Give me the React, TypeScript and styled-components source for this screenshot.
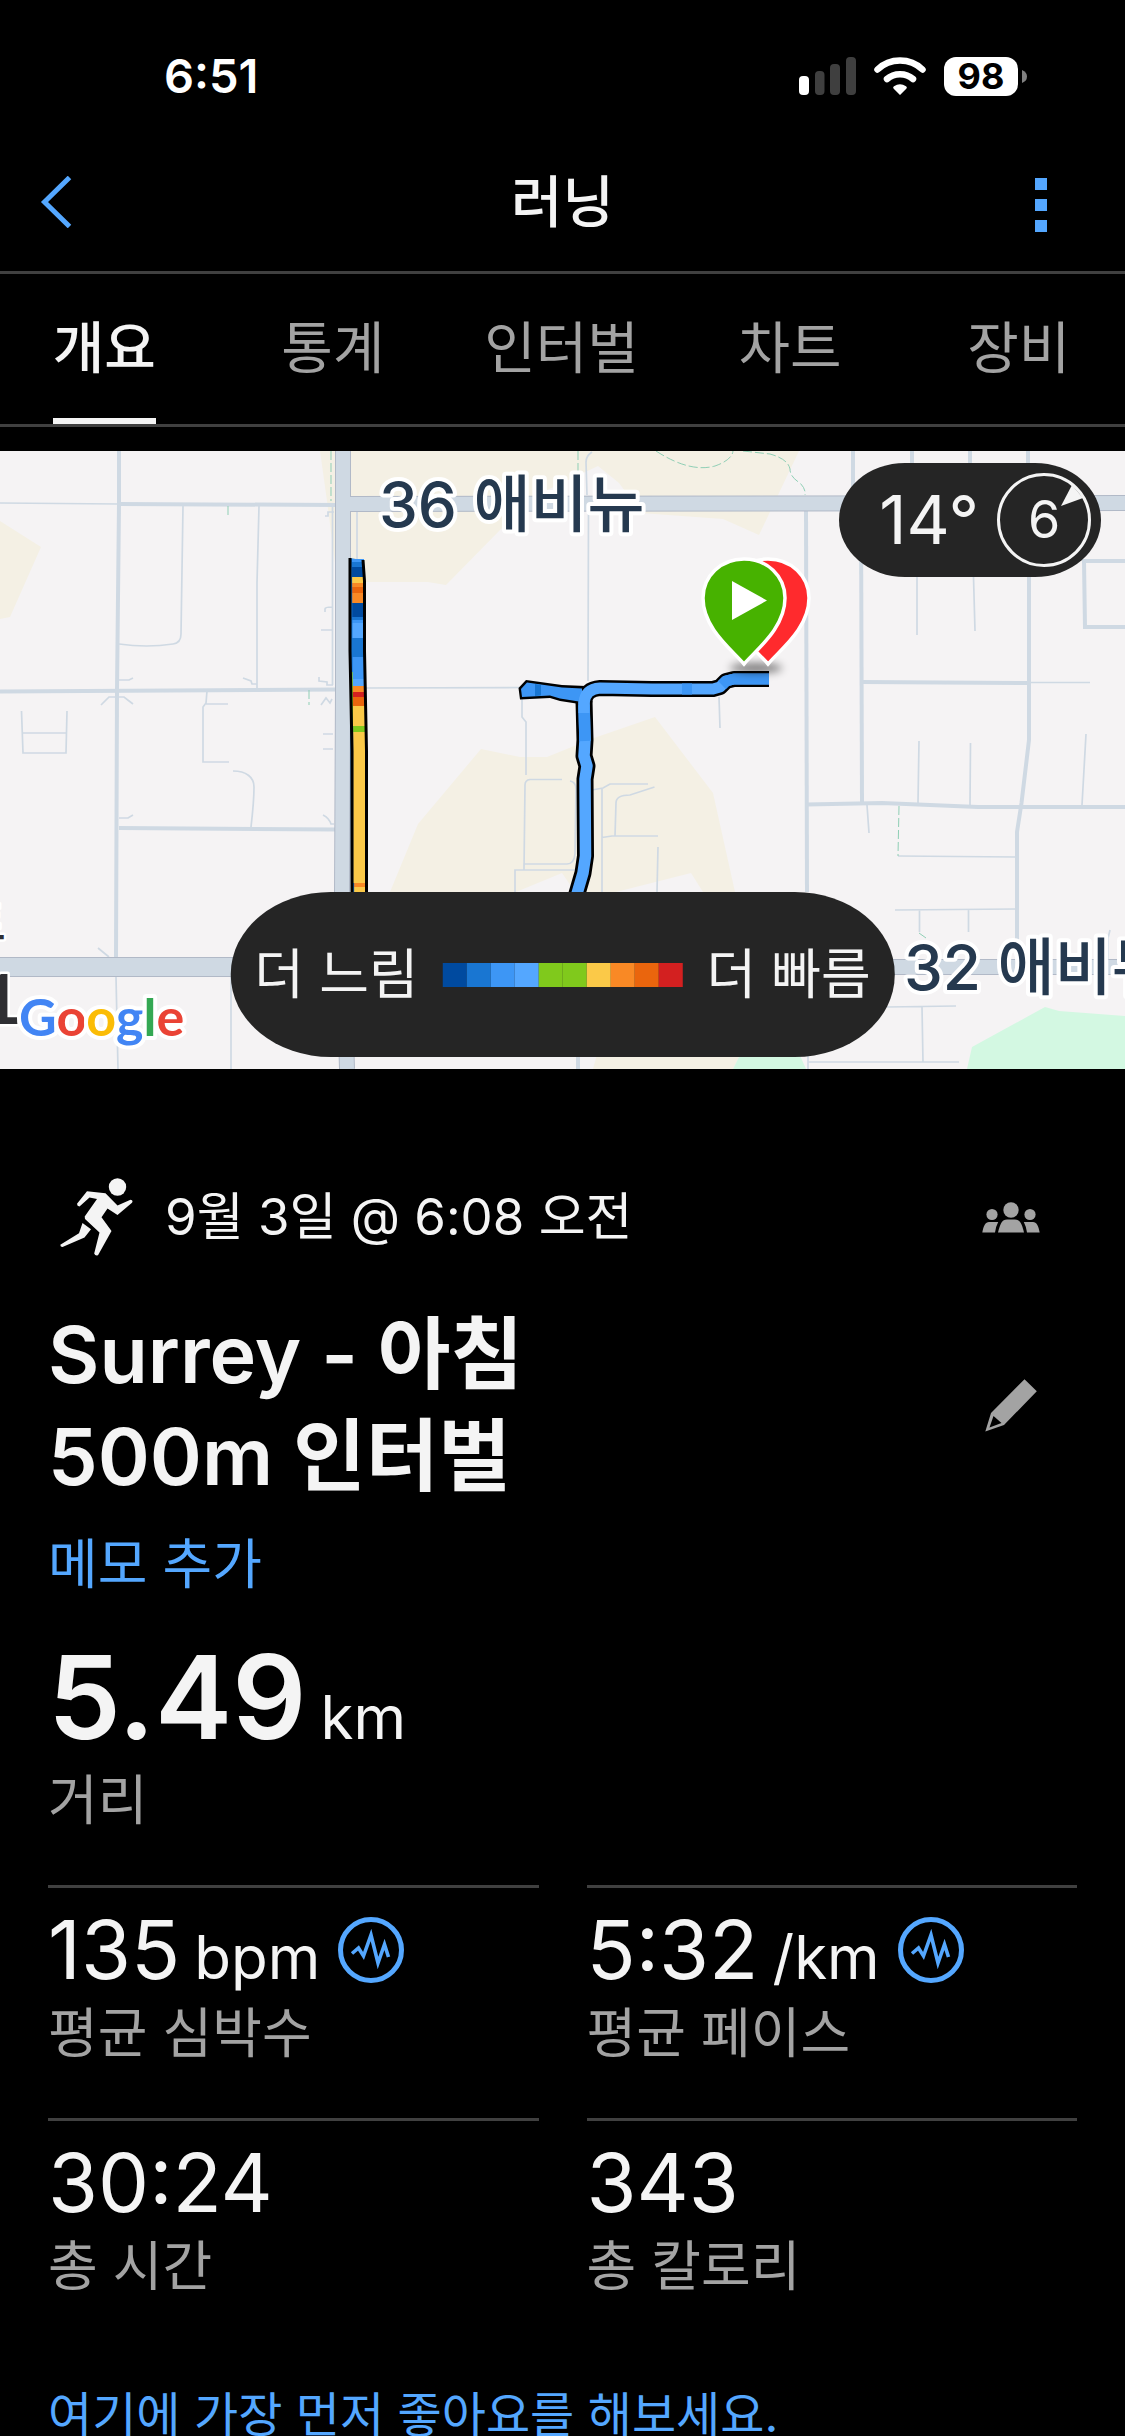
import React from 'react';
import styled, { createGlobalStyle } from 'styled-components';

const color = {
  ink: '#f4f4f4',
  muted: '#a3a3a3',
  line: '#404040',
  link: '#54a7ff',
  panel: '#252525',
  road: '#cfd9e3',
  roadEdge: '#b1b9c7',
  land: '#f5f3f4',
  field: '#f4f0e4',
  park: '#d3f8e2',
  trail: '#8fcfb5',
  mapText: '#25394f',
};

const pace = {
  navy: '#004a9f',
  blue: '#1976d2',
  azure: '#3d96f5',
  sky: '#54a7ff',
  green: '#80c91c',
  yellow: '#fbc948',
  orange: '#f98925',
  rust: '#ea650d',
  red: '#d32020',
};

const GlobalStyle = createGlobalStyle`
  *, *::before, *::after { box-sizing: border-box; }
  html, body { margin: 0; background: #000; }
  body { font-family: Inter, "Noto Sans CJK KR", sans-serif; color: ${color.ink}; }
  h1, h2, p, dl, dt, dd { margin: 0; font-weight: 400; }
  button { background: none; border: 0; padding: 0; margin: 0; font: inherit; color: inherit; cursor: pointer; }
  svg { display: block; }
`;

const Page = styled.div`
  display: flex;
  flex-direction: column;
  height: 100vh;
  background: #000;
`;

const StatusBar = styled.div`
  display: flex;
  flex: none;
  align-items: center;
  justify-content: space-between;
  height: 132px;
  padding: 20px 98px 0 164px;
`;

const Clock = styled.time`
  font-size: 47px;
  line-height: 48px;
  font-weight: 600;
  color: #fff;
`;

const StatusIcons = styled.div`
  display: flex;
  align-items: center;
  gap: 18px;
`;

const Battery = styled.div`
  display: flex;
  align-items: center;
  gap: 4px;
`;

const BatteryBody = styled.span`
  width: 74px;
  height: 39px;
  border-radius: 12px;
  background: #fff;
  color: #000;
  font-size: 36px;
  line-height: 39px;
  font-weight: 700;
  text-align: center;
`;

const Header = styled.header`
  display: grid;
  flex: none;
  grid-template-columns: 120px 1fr 120px;
  align-items: center;
  height: 142px;
  border-bottom: 3px solid ${color.line};
`;

const HeaderTitle = styled.h1`
  font-size: 56px;
  line-height: 68px;
  font-weight: 500;
  text-align: center;
`;

const HeaderButton = styled.button<{ $end?: boolean }>`
  display: flex;
  justify-content: ${(p) => (p.$end ? 'flex-end' : 'flex-start')};
  padding: ${(p) => (p.$end ? '6px 78px 0 0' : '0 0 0 40px')};
`;

const Tabs = styled.nav`
  display: grid;
  flex: none;
  grid-template-columns: repeat(5, 1fr);
  justify-items: center;
  margin: 0 -8px 0 -10px;
  border-bottom: 3px solid ${color.line};
`;

const Tab = styled.button<{ $active?: boolean }>`
  height: 150px;
  padding-top: 4px;
  border-bottom: 6px solid ${(p) => (p.$active ? color.ink : 'transparent')};
  color: ${(p) => (p.$active ? color.ink : color.muted)};
  font-size: 56px;
  line-height: 68px;
  font-weight: ${(p) => (p.$active ? 500 : 400)};
  white-space: nowrap;
`;

const Shell = styled.div`
  flex: none;
  overflow: hidden;
`;

const Content = styled.main`
  flex: 1;
  min-height: 0;
  overflow-y: auto;
  scrollbar-width: none;
  padding-top: 24px;
`;

const MapPanel = styled.section`
  position: relative;
  width: 100%;
  aspect-ratio: 1125 / 618;
  overflow: hidden;
  background: ${color.land};
`;

const MapArt = styled.svg`
  width: 100%;
  height: 100%;
`;

const Weather = styled.div`
  position: absolute;
  top: 12px;
  right: 24px;
  display: flex;
  align-items: center;
  gap: 18px;
  height: 114px;
  padding: 0 10px 0 40px;
  border-radius: 66px / 57px;
  background: ${color.panel};
  font-size: 67px;
  line-height: 80px;
`;

const Wind = styled.div`
  display: grid;
  place-items: center;
  width: 94px;
  height: 94px;
  font-size: 52px;
  line-height: 68px;
  > * { grid-area: 1 / 1; }
`;

const Legend = styled.div`
  position: absolute;
  left: 50%;
  bottom: 12px;
  transform: translateX(-50%);
  display: flex;
  align-items: center;
  gap: 24px;
  height: 165px;
  padding: 0 24px;
  border-radius: 100px / 82px;
  background: ${color.panel};
  font-size: 54px;
  line-height: 68px;
  white-space: nowrap;
`;

const Scale = styled.div`
  display: flex;
`;

const Swatch = styled.span<{ $fill: string }>`
  width: 24px;
  height: 24px;
  background: ${(p) => p.$fill};
`;

const Details = styled.section`
  padding: 98px 48px 0;
`;

const Row = styled.div`
  display: flex;
  align-items: center;
  justify-content: space-between;
`;

const DateLine = styled.div`
  display: flex;
  align-items: center;
  gap: 32px;
  height: 100px;
  padding-left: 12px;
  font-size: 51px;
  line-height: 68px;
`;

const IconButton = styled.button`
  display: flex;
  flex: none;
  align-items: center;
  justify-content: center;
  width: 132px;
  height: 96px;
`;

const TitleRow = styled(Row)`
  margin-top: 36px;
`;

const Title = styled.h2`
  font-size: 79px;
  line-height: 102px;
  font-weight: 600;
`;

const TextLink = styled.a<{ $size: number; $top: number }>`
  display: block;
  margin-top: ${(p) => p.$top}px;
  font-size: ${(p) => p.$size}px;
  line-height: 76px;
  color: ${color.link};
  text-decoration: none;
`;

const Distance = styled.dl`
  display: flex;
  flex-direction: column-reverse;
  margin-top: 34px;
`;

const Stats = styled.div`
  display: grid;
  grid-template-columns: 1fr 1fr;
  gap: 50px 48px;
  margin-top: 50px;
`;

const Stat = styled.dl`
  display: flex;
  flex-direction: column-reverse;
  padding-top: 22px;
  border-top: 3px solid ${color.line};
`;

const Label = styled.dt`
  margin-top: 10px;
  font-size: 54px;
  line-height: 68px;
  color: ${color.muted};
`;

const Value = styled.dd<{ $big?: boolean }>`
  display: flex;
  align-items: center;
  gap: 18px;
  font-size: ${(p) => (p.$big ? 116 : 81)}px;
  line-height: ${(p) => (p.$big ? 120 : 80)}px;
  font-weight: ${(p) => (p.$big ? 600 : 400)};
  white-space: nowrap;
`;

const Unit = styled.small`
  margin-left: 14px;
  font-size: 60px;
  line-height: 40px;
  font-weight: 400;
`;

const Runner = () => (
  <svg width="73" height="78" viewBox="0 0 73 78" fill={color.ink} aria-hidden="true">
    <circle cx="57.5" cy="9" r="8.7" />
    <path d="M27 13.3 45.500 15.300 57.500 27.500 70.500 21.800Q73.500 22.200 72 24.700L57.500 37 47.500 30.500 41.500 39.300 51.500 53 38 77.300Q35 78 34.200 75.500L39.500 54.500 25 41 24.700 38.500 37 21 29.500 19.500 19.500 28.500Q17 28.200 17 25.700Z" />
    <path d="M22.500 45 31 51.200 24.500 59.500 2.500 69Q.3 69 .3 66.800L19 55.300Z" />
  </svg>
);

const People = () => (
  <svg width="58" height="31" viewBox="0 0 58 31" fill={color.muted} aria-hidden="true">
    <circle cx="29" cy="8" r="7.700" />
    <circle cx="10" cy="12.500" r="5.600" />
    <circle cx="48" cy="12.500" r="5.600" />
    <path d="M16 30.500C18 22 20 17.500 25 17.500H33C38 17.500 40 22 42 30.500Z" />
    <path d="M.3 30.500C1.500 24 3.500 20 7 20H16.200Q14 24 13 30.500Z" />
    <path d="M57.700 30.500C56.500 24 54.500 20 51 20H41.800Q44 24 45 30.500Z" />
  </svg>
);

const Pencil = () => (
  <svg width="52" height="53" viewBox="0 0 52 53" fill={color.muted} fillRule="evenodd" aria-hidden="true">
    <path d="M39.500.3 51.800 12.300 19 46 .3 52.500 6 34ZM8.500 37 4.500 48.500 16.500 44Z" />
  </svg>
);

const Pulse = () => (
  <svg width="66" height="66" viewBox="0 0 66 66" fill="none" stroke={color.link} aria-hidden="true">
    <circle cx="33" cy="33" r="30.500" strokeWidth="5" />
    <path d="M14 36.500 20.500 31 25.500 39 33 18 40 46 46.500 27.500 50.500 40" strokeWidth="3.600" strokeMiterlimit="10" />
  </svg>
);

const Signal = () => (
  <svg width="57" height="38" viewBox="0 0 57 38" aria-label="signal">
    <rect x="0" y="19" width="10" height="19" rx="4" fill="#fff" />
    <rect x="16" y="14" width="9.500" height="24" rx="4" fill="#3f3f3f" />
    <rect x="31" y="7" width="10" height="31" rx="4" fill="#3f3f3f" />
    <rect x="47" y="0" width="10" height="38" rx="4" fill="#3f3f3f" />
  </svg>
);

const Wifi = () => (
  <svg width="52" height="38" viewBox="0 0 52 38" aria-label="wi-fi">
    <g fill="none" stroke="#fff" strokeWidth="6.500" strokeLinecap="round">
      <path d="M3.500 12.500C16 .6 36 .6 48.500 12.500" />
      <path d="M13 22C20 15.500 32 15.500 39 22" />
    </g>
    <path d="M26 38 19.500 31.500Q18.500 30 20 29.200 26 25.500 32 29.200 33.500 30 32.500 31.500Z" fill="#fff" />
  </svg>
);

const thickRoads = [
  'M119 0V53L117 240 116 506',
  'M119 53 337 54',
  'M0 240.500 337 238.500',
  'M119 377 337 378.500',
  'M806 58 807 441',
  'M853 0V44M912 0V44M970 0V44M1028 0V44',
  'M861 58 862 352',
  'M1029 58V289L1021.500 352 1017 381V510',
  'M1125 110H1084L1085 176H1125',
  'M862 231 1029 232',
  'M807 353.500 882 352 978 356H1125',
  'M578 600V618',
];

const thinRoads = [
  'M0 52 119 53',
  'M116 526 118 618M231 526V618',
  'M183 55 181 183Q181 192 173 193 147 197 119 193',
  'M259 55 257 132V237',
  'M21.500 260 23 302H66L67 260M23 282H66',
  'M101 254 109 246H124L133 253',
  'M207 240 206 252 203 256V311H229M206 253H228',
  'M233 320C246 320 254 326 254 336Q254 350 251 376',
  'M119 229H129L133 227M243 227 251 230 252 233H257M119 367H128L133 364M98 497 109 506',
  'M332.500 54V234M325 65H328V61H334M325 161V158Q325 156 332 156M321 179H333M319 226V230L327 231V234H333',
  'M321 254 326 247 330 252 332 248M323 283H333M323 298H333M323 364Q329 367 331 373H334',
  'M357 60V108',
  'M366 237 520 236.500',
  'M522 246V266L526 271V324',
  'M570 330Q576 331 576 338L575 403Q574 413 567 413H524V419M562 328.500H530Q525 329 525 334L524 419M515 441V419H575',
  'M592 1Q586 5 586 11L587 44M588.500 60 588 230',
  'M808 600V618',
  'M917 126V184M973.500 126 975 180',
  'M1029 231.500H1090',
  'M919 290 918 352M970.500 292 970 354M1086 283 1082 354M867 354 869 382',
  'M898 405 1016 406M895 459 1016 458M919.500 459V481M968.500 458V481',
  'M887 556 956 555M922 556 923 611M808 611H959',
  'M1110 479 1108 487V509',
  'M592 339 603 337 610 333H648M654.500 336 630 344Q616 344 616 352L615 385M602 337V441M602 386.500 612 385H658M658 396 657 441',
  'M719 246 720 277',
];

const majorRoads = [
  { d: 'M343 0V236L342 445 347 618', w: 14 },
  { d: 'M350 53 1125 52', w: 14 },
  { d: 'M0 516H400', w: 18 },
  { d: 'M800 516H1125', w: 14 },
];

/* Stretches of the north-south leg: start and end down the map, with pace colour. */
const leg: [number, number, string][] = [
  [108, 111, pace.azure],
  [111, 116, pace.blue],
  [116, 126, pace.navy],
  [126, 132, pace.yellow],
  [132, 136, pace.orange],
  [136, 142, pace.rust],
  [142, 152, pace.orange],
  [152, 166, pace.navy],
  [166, 169, pace.blue],
  [169, 172, pace.azure],
  [172, 187, pace.sky],
  [187, 206, pace.blue],
  [206, 228, pace.azure],
  [228, 235, pace.sky],
  [235, 241, pace.orange],
  [241, 246, pace.red],
  [246, 255, pace.rust],
  [255, 275, pace.yellow],
  [275, 281, pace.green],
  [281, 432, pace.yellow],
  [432, 436, pace.orange],
  [436, 450, pace.yellow],
];

const routeEast = 'M584 262V252Q585 238 600 237L652 238 713 238 720 236 726 230 734 228 769 228';
const routeSouth = 'M584 250 585 289 584 305 587 315 585 328 585.500 405 583 422 576 446';
const pin = 'M744 213C731 198 703 177 703 147 703 125 721 108 744 108S785 125 785 147C785 177 757 198 744 213Z';

const RouteMap = () => (
  <MapArt viewBox="0 0 1125 618" preserveAspectRatio="xMidYMid slice" role="img" aria-label="러닝 경로">
    <defs>
      <filter id="pinShadow" x="-50%" y="-100%" width="200%" height="300%">
        <feGaussianBlur stdDeviation="4" />
      </filter>
    </defs>
    <g fill={color.field}>
      <path d="M0 70 41 96 10 166 0 168ZM320 0H336V120L327 50Z" />
      <path d="M350 0H799L759 84 723 68 641 62 619 32 598 15 545 40 502 77 446 134 428 131H350Z" />
      <path d="M390 441 418 373 481 298 520 306H547L594 287 655 266 713 342 735 441H703L691 422 616 441H575L562 422 516 441Z" />
      <path d="M593 618 598 600H742L733 618Z" />
    </g>
    <path d="M733 618 742 600H798L806 618ZM967 618 972 596 1045 556 1059 560 1125 565V618Z" fill={color.park} />
    <g fill="none" stroke={color.road}>
      {thinRoads.map((d) => <path key={d} d={d} strokeWidth="1.700" />)}
      {thickRoads.map((d) => <path key={d} d={d} strokeWidth="4" />)}
    </g>
    <path
      d="M656 0Q690 22 715 15 732 9 733 0M743 0 770 3Q788 8 790 18 790 26 800 32 806 38 805 44M578 0V44M331 0V50M228 55V66M309 239V254M899 355 898 405M919 482 926 487"
      fill="none" stroke={color.trail} strokeWidth="1" strokeDasharray="9 3"
    />
    <g fill="none" stroke={color.roadEdge}>
      {majorRoads.map((r) => <path key={r.d} d={r.d} strokeWidth={r.w + 2} />)}
    </g>
    <g fill="none" stroke={color.road}>
      {majorRoads.map((r) => <path key={r.d} d={r.d} strokeWidth={r.w} />)}
    </g>

    <path d="M349 107 363 109 365 130 366 230 367 450H351L350 230Z" fill={pace.blue} />
    <path d="M351 221 352 275H356V221Z" fill={pace.green} />
    {leg.map(([from, to, fill]) => {
      const x = 352 + (from - 108) / 150;
      return <rect key={from} x={x} y={from} width="12" height={to - from} fill={fill} />;
    })}
    <path d="M350 107 350 200 352 300 352 450M363 109 364.500 130 364.500 200 366.500 300 366.500 450" fill="none" stroke="#000" strokeWidth="3" />

    <g fill="none" strokeLinejoin="round">
      <path d="M518.500 237 526 229 562 234 586 235V254L560 250 550 247 520 248.500Z" fill="#000" />
      <path d={routeSouth} stroke="#000" strokeWidth="17" />
      <path d={routeEast} stroke="#000" strokeWidth="16" />
      <path d="M521 238 527 231.500 562 236.500 582 237.500V251L560 247.500 550 244.500 522 246Z" fill={pace.azure} />
      <path d="M535 233 541 234V244.500L535 245Z" fill={pace.blue} />
      <path d={routeSouth} stroke={pace.sky} strokeWidth="11.500" />
      <path d="M584 254 585 290" stroke={pace.azure} strokeWidth="11.500" />
      <path d={routeEast} stroke={pace.sky} strokeWidth="11" />
      <path d="M682 238H692M722 234 726 230 734 228 769 228" stroke={pace.azure} strokeWidth="11" />
    </g>

    <ellipse cx="756" cy="217" rx="26" ry="5" fill="#000" opacity=".5" filter="url(#pinShadow)" />
    <g stroke="#fff" strokeWidth="3.500">
      <path d={pin} transform="translate(24 0)" fill="#ff2a2d" />
      <path d={pin} fill="#47b200" />
    </g>
    <path d="M732 130 767 149.500 732 169Z" fill="#fff" />

    <g fontSize="62" fontWeight="500" fill={color.mapText} stroke="#fff" strokeWidth="8" strokeLinejoin="round" paintOrder="stroke">
      <text x="379" y="76">36 애비뉴</text>
      <text x="904" y="539">32 애비뉴</text>
    </g>
    <g fill="#2f2f33" stroke="#fff" strokeWidth="5" strokeLinejoin="round" paintOrder="stroke" fontFamily="Noto Sans CJK KR, sans-serif">
      <text x="6" y="489" fontSize="48" fontWeight="500" textAnchor="end">트</text>
      <text x="22" y="573" fontSize="70" fontWeight="500" textAnchor="end">1</text>
    </g>
    <text x="19" y="585" fontFamily="Lato, sans-serif" fontSize="52" fontWeight="700" stroke="#fff" strokeWidth="8" strokeLinejoin="round" paintOrder="stroke">
      <tspan fill="#4285f4">G</tspan><tspan fill="#ea4335">o</tspan><tspan fill="#fbbc05">o</tspan><tspan fill="#4285f4">g</tspan><tspan fill="#34a853">l</tspan><tspan fill="#ea4335">e</tspan>
    </text>
  </MapArt>
);

const tabs = ['개요', '통계', '인터벌', '차트', '장비'];

const scale = [
  pace.navy, pace.blue, pace.azure, pace.sky, pace.green,
  pace.green, pace.yellow, pace.orange, pace.rust, pace.red,
];

const stats = [
  { label: '평균 심박수', value: '135', unit: 'bpm', chart: true },
  { label: '평균 페이스', value: '5:32', unit: '/km', chart: true },
  { label: '총 시간', value: '30:24' },
  { label: '총 칼로리', value: '343' },
];

export default function App() {
  return (
    <Page>
      <GlobalStyle />
      <StatusBar>
        <Clock>6:51</Clock>
        <StatusIcons>
          <Signal />
          <Wifi />
          <Battery>
            <BatteryBody>98</BatteryBody>
            <svg width="5" height="13" viewBox="0 0 5 13" aria-hidden="true">
              <path d="M0 0Q5 2 5 6.500T0 13Z" fill="#808080" />
            </svg>
          </Battery>
        </StatusIcons>
      </StatusBar>

      <Header>
        <HeaderButton aria-label="뒤로">
          <svg width="32" height="52" viewBox="0 0 32 52" fill="none" stroke={color.link} strokeWidth="5" aria-hidden="true">
            <path d="M29.500 1.500 4.500 26 29.500 50.500" />
          </svg>
        </HeaderButton>
        <HeaderTitle>러닝</HeaderTitle>
        <HeaderButton $end aria-label="더 보기">
          <svg width="12" height="54" viewBox="0 0 12 54" fill={color.link} aria-hidden="true">
            <path d="M0 0H12V12H0ZM0 21H12V33H0ZM0 42H12V54H0Z" />
          </svg>
        </HeaderButton>
      </Header>

      <Shell>
        <Tabs>
          {tabs.map((name, i) => (
            <Tab key={name} $active={i === 0} aria-current={i === 0 ? 'page' : undefined}>{name}</Tab>
          ))}
        </Tabs>
      </Shell>

      <Content>
        <MapPanel>
          <RouteMap />
          <Weather>
            <span>14°</span>
            <Wind>
              <svg width="94" height="94" viewBox="0 0 94 94" aria-hidden="true">
                <circle cx="47" cy="47" r="45.500" fill="none" stroke={color.ink} strokeWidth="3" />
                <path d="M64 33 75 12 86 25Z" fill={color.ink} />
              </svg>
              <span>6</span>
            </Wind>
          </Weather>
          <Legend>
            <span>더 느림</span>
            <Scale>
              {scale.map((fill, i) => <Swatch key={i} $fill={fill} />)}
            </Scale>
            <span>더 빠름</span>
          </Legend>
        </MapPanel>

        <Details>
          <Row>
            <DateLine>
              <Runner />
              <p>9월 3일 @ 6:08 오전</p>
            </DateLine>
            <IconButton aria-label="공개 범위"><People /></IconButton>
          </Row>
          <TitleRow>
            <Title>Surrey - 아침<br />500m 인터벌</Title>
            <IconButton aria-label="제목 편집"><Pencil /></IconButton>
          </TitleRow>
          <TextLink href="#memo" $size={54} $top={20}>메모 추가</TextLink>

          <Distance>
            <Label>거리</Label>
            <Value $big><span>5.49<Unit>km</Unit></span></Value>
          </Distance>

          <Stats>
            {stats.map((s) => (
              <Stat key={s.label}>
                <Label>{s.label}</Label>
                <Value>
                  <span>{s.value}{s.unit && <Unit>{s.unit}</Unit>}</span>
                  {s.chart && <Pulse />}
                </Value>
              </Stat>
            ))}
          </Stats>

          <TextLink href="#likes" $size={48} $top={76}>여기에 가장 먼저 좋아요를 해보세요.</TextLink>
        </Details>
      </Content>
    </Page>
  );
}
